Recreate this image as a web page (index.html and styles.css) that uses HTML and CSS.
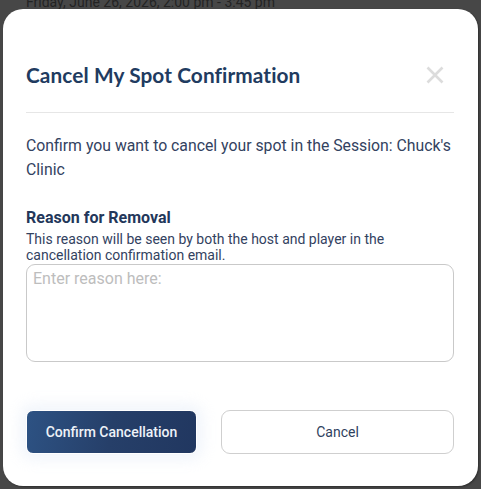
FILE: index.html
```html
<!DOCTYPE html>
<html lang="en">
<head>
<meta charset="utf-8">
<title>Cancel My Spot Confirmation</title>
<link rel="stylesheet" href="styles.css">
</head>
<body>
<div class="page">
  <p class="session-time">Friday, June 26, 2026, 2:00 pm - 3:45 pm</p>
</div>
<div class="modal" role="dialog" aria-labelledby="modal-title">
  <div class="modal-header">
    <h2 id="modal-title" class="modal-title">Cancel My Spot Confirmation</h2>
    <button class="close-btn" aria-label="Close">
      <svg width="18" height="18" viewBox="0 0 18 18"><path d="M1.5 1.5 L16.5 16.5 M16.5 1.5 L1.5 16.5" stroke="#dcdcdc" stroke-width="2.6" fill="none"/></svg>
    </button>
  </div>
  <div class="modal-body">
    <p class="confirm-text">Confirm you want to cancel your spot in the Session: Chuck's Clinic</p>
    <label class="field-label" for="reason">Reason for Removal</label>
    <p class="field-help">This reason will be seen by both the host and player in the cancellation confirmation email.</p>
    <textarea id="reason" class="reason-input" placeholder="Enter reason here:"></textarea>
  </div>
  <div class="modal-footer">
    <button class="btn btn-primary">Confirm Cancellation</button>
    <button class="btn btn-secondary">Cancel</button>
  </div>
</div>
</body>
</html>
```
FILE: styles.css
```css
html, body {
  margin: 0;
  padding: 0;
  height: 100%;
  background: #474747;
  overflow: hidden;
}
body {
  font-family: Roboto, "Liberation Sans", sans-serif;
}
.page {
  padding: 0 26px;
}
.session-time {
  margin: -7px 0 0;
  font-size: 14px;
  line-height: 18px;
  color: #232323;
}
.modal {
  position: absolute;
  left: 3px;
  top: 9px;
  width: 475px;
  height: 477px;
  box-sizing: border-box;
  background: #fff;
  border-radius: 20px;
  padding: 0 24px 0 23px;
  display: flex;
  flex-direction: column;
  box-shadow: 1px 1px 2px rgba(0,0,0,0.35);
}
.modal-header {
  display: flex;
  align-items: center;
  justify-content: space-between;
  padding: 54px 0 25px;
  border-bottom: 1px solid #e6e6e6;
}
.modal-title {
  margin: 0;
  font-family: Lato, "Open Sans", sans-serif;
  font-weight: 700;
  font-size: 20.8px;
  line-height: 24px;
  color: #213b60;
  letter-spacing: 0.1px;
}
.close-btn {
  border: 0;
  background: none;
  padding: 0;
  margin-right: 10px;
  width: 18px;
  height: 18px;
  display: flex;
  cursor: pointer;
}
.modal-body {
  display: flex;
  flex-direction: column;
  padding-top: 21px;
}
.confirm-text {
  margin: 0;
  font-size: 15.8px;
  line-height: 24px;
  color: #33425f;
}
.field-label {
  margin-top: 26px;
  font-size: 16px;
  font-weight: 700;
  line-height: 20px;
  color: #23375a;
}
.field-help {
  margin: 3px 0 0;
  font-size: 14px;
  line-height: 16px;
  color: #33425f;
}
.reason-input {
  margin-top: 1px;
  height: 98px;
  box-sizing: border-box;
  border: 1px solid #c9c9c9;
  border-radius: 9px;
  padding: 4px 6px;
  resize: none;
  font-family: Roboto, "Liberation Sans", sans-serif;
  font-size: 16px;
  line-height: 19px;
  color: #33425f;
  outline: none;
}
.reason-input::placeholder {
  color: #bdbdbd;
}
.modal-footer {
  display: flex;
  gap: 24px;
  padding-top: 48px;
}
.btn {
  height: 44px;
  box-sizing: border-box;
  font-family: Roboto, "Liberation Sans", sans-serif;
  font-size: 14px;
  cursor: pointer;
}
.btn-primary {
  width: 171px;
  border: 1px solid #fff;
  border-radius: 7px;
  background: linear-gradient(100deg, #2d5283 0%, #263f69 50%, #213760 100%);
  color: #eef2f8;
  font-weight: 500;
  box-shadow: 0 0 14px 6px rgba(225, 233, 246, 0.45);
}
.btn-secondary {
  flex: 1;
  border: 1px solid #cfcfcf;
  border-radius: 9px;
  background: #fff;
  color: #2f3f5e;
}
```
